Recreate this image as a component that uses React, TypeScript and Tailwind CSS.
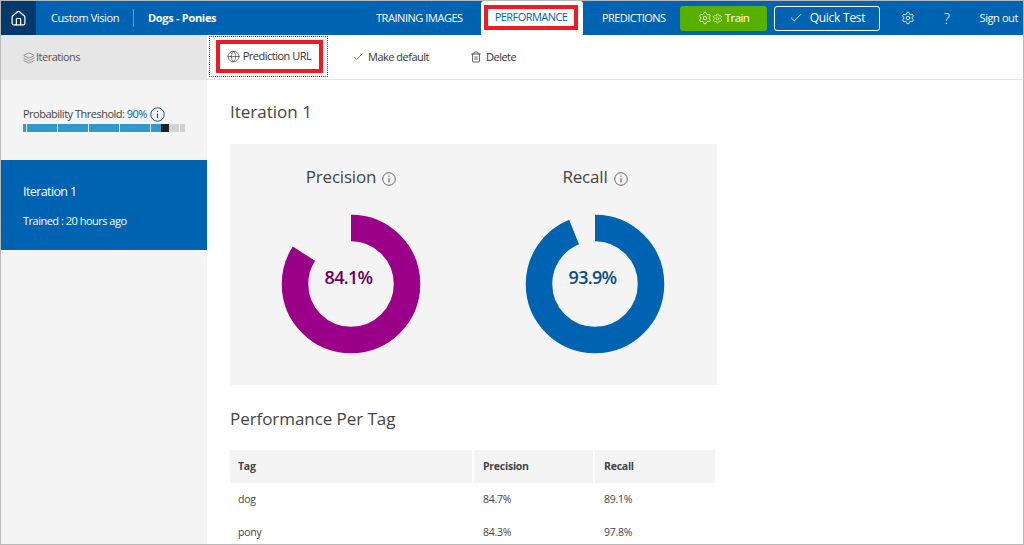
import { Check, Globe, House, Layers, Settings, Trash2 } from "lucide-react";

function InfoIcon({ size, color }: { size: number; color: string }) {
  return (
    <svg width={size} height={size} viewBox="0 0 16 16" fill="none" stroke={color} strokeWidth="1">
      <circle cx="8" cy="8" r="7.2" />
      <path d="M8 7v5" strokeWidth="1.2" />
      <path d="M8 4v1.3" strokeWidth="1.2" />
    </svg>
  );
}

function Donut({ value, color, textColor }: { value: number; color: string; textColor: string }) {
  return (
    <div className="relative w-[140px] h-[140px]">
      <svg width="140" height="140" viewBox="0 0 140 140">
        <circle
          cx="70"
          cy="70"
          r="56"
          fill="none"
          stroke={color}
          strokeWidth="26.5"
          pathLength={100}
          strokeDasharray={`${value} ${100 - value}`}
          transform="rotate(-90 70 70)"
        />
      </svg>
      <div
        className="absolute inset-0 flex items-center justify-center pb-[14px] pr-[5px] text-[18px] font-semibold tracking-[-0.7px]"
        style={{ color: textColor }}
      >
        {value}%
      </div>
    </div>
  );
}

function Metric({ title, value, color, textColor }: { title: string; value: number; color: string; textColor: string }) {
  return (
    <div className="flex flex-col items-center">
      <div className="flex items-center gap-[6px] h-[24px] mt-[21px] text-[17px] tracking-[-0.2px] text-[#444444]">
        {title}
        <span className="mt-[3px]">
          <InfoIcon size={14} color="#555555" />
        </span>
      </div>
      <div className="mt-[25px]">
        <Donut value={value} color={color} textColor={textColor} />
      </div>
    </div>
  );
}

export default function App() {
  return (
    <div
      className="w-[1024px] h-[545px] border border-[#b9b9b9] overflow-hidden flex flex-col bg-white text-[#333333]"
      style={{ fontFamily: '"Open Sans", "Noto Sans", sans-serif' }}
    >
      <header className="h-[34px] shrink-0 flex items-center bg-[#0063b1] text-white text-[11px] tracking-[-0.4px]">
        <div className="w-[35px] h-full bg-[#003a6c] flex items-center justify-center">
          <House size={17} strokeWidth={1.7} />
        </div>
        <span className="ml-[15px] w-[67px] whitespace-nowrap">Custom Vision</span>
        <div className="ml-[15px] w-px h-[18px] bg-[#5b9bd0]" />
        <span className="ml-[14px] w-[69px] font-bold whitespace-nowrap tracking-[-0.3px]">Dogs - Ponies</span>
        <span className="ml-[159px] w-[88px] whitespace-nowrap tracking-[-0.45px]">TRAINING IMAGES</span>
        <div className="ml-[17px] w-[102px] h-[34px] bg-white rounded-t-[3px] pt-[4px] pl-[3px] pr-[5px]">
          <div className="h-[25px] border-[4px] border-[#ed1c24] flex items-center justify-center text-[#0063b1] whitespace-nowrap tracking-[-0.55px]">
            PERFORMANCE
          </div>
        </div>
        <span className="ml-[19px] w-[64px] whitespace-nowrap tracking-[-0.55px]">PREDICTIONS</span>
        <button className="ml-[14px] w-[87px] h-[25px] rounded-[3px] bg-[#57b000] flex items-center justify-center gap-[2px] text-[11.5px] tracking-[-0.6px]">
          <span className="flex items-center">
            <Settings size={14} strokeWidth={1.3} />
            <Settings size={11} strokeWidth={1.3} />
          </span>
          Train
        </button>
        <button className="ml-[7px] w-[106px] h-[25px] rounded-[3px] border border-white flex items-center justify-center gap-[7px] text-[12px] tracking-[-0.25px]">
          <Check size={14} strokeWidth={1.4} />
          Quick Test
        </button>
        <span className="ml-[21px]">
          <Settings size={14} strokeWidth={1.5} />
        </span>
        <span className="ml-[29px] text-[14px] font-light">?</span>
        <span className="ml-[30px] whitespace-nowrap">Sign out</span>
      </header>

      <div className="flex-1 flex min-h-0">
        <aside className="w-[206px] shrink-0 bg-[#f4f4f4] flex flex-col text-[11px] tracking-[-0.5px]">
          <div className="h-[45px] bg-[#e6e6e6] flex items-center pl-[22px] gap-[1px] text-[#555555]">
            <Layers size={12} strokeWidth={1.2} />
            Iterations
          </div>
          <div className="pl-[22px] pt-[26px] h-[80px]">
            <div className="flex items-center h-[16px] text-[#444444] whitespace-nowrap">
              Probability Threshold:&nbsp;<span className="text-[#0063b1]">90%</span>
              <span className="ml-[3px]">
                <InfoIcon size={15} color="#0f4c81" />
              </span>
            </div>
            <div className="mt-[2px] w-[162px] h-[8px] flex">
              <div className="w-[138px] flex gap-px">
                <div className="w-[3px] bg-[#3399cc]" />
                <div className="w-[30px] bg-[#3399cc]" />
                <div className="w-[30px] bg-[#3399cc]" />
                <div className="w-[30px] bg-[#3399cc]" />
                <div className="w-[30px] bg-[#3399cc]" />
                <div className="flex-1 bg-[#3399cc]" />
              </div>
              <div className="w-[8px] bg-[#1f1f1f]" />
              <div className="w-[10px] bg-[#d2d2d2]" />
              <div className="w-px bg-[#f4f4f4]" />
              <div className="flex-1 bg-[#d2d2d2]" />
            </div>
          </div>
          <div className="h-[90px] bg-[#0063b1] text-white pl-[22px] pt-[22px]">
            <div className="text-[12.5px] leading-[20px] tracking-[-0.6px]">Iteration 1</div>
            <div className="mt-[11px] leading-[16px]">Trained : 20 hours ago</div>
          </div>
        </aside>

        <main className="flex-1 min-w-0 flex flex-col">
          <div className="h-[45px] shrink-0 border-b border-[#e6e6e6] flex items-center text-[11px] tracking-[-0.5px] text-[#333333]">
            <div className="ml-[2px] w-[119px] h-[41px] mt-[-1px] pl-[1px] border border-dotted border-[#444444] flex items-center justify-center">
              <div className="w-[107px] h-[33px] border-[4px] border-[#ed1c24] flex items-center justify-center gap-[3px]">
                <Globe size={13} strokeWidth={1.2} />
                Prediction URL
              </div>
            </div>
            <span className="ml-[24px] flex items-center gap-[4px]">
              <Check size={12} strokeWidth={1.5} color="#6b4a1f" />
              Make default
            </span>
            <span className="ml-[41px] flex items-center gap-[4px]">
              <Trash2 size={12} strokeWidth={1.5} />
              Delete
            </span>
          </div>

          <div className="pl-[23px] flex-1 overflow-hidden">
            <h1 className="mt-[19px] h-[26px] leading-[26px] text-[17px] text-[#444444]">Iteration 1</h1>
            <section className="mt-[19px] w-[487px] h-[241px] bg-[#f4f4f4] grid grid-cols-[242px_246px]">
              <Metric title="Precision" value={84.1} color="#9b0088" textColor="#6b0060" />
              <Metric title="Recall" value={93.9} color="#0063b1" textColor="#0f4c81" />
            </section>
            <h2 className="mt-[21px] h-[26px] leading-[26px] text-[17px] tracking-[-0.06px] text-[#444444]">Performance Per Tag</h2>
            <div className="mt-[18px] w-[486px] text-[10.5px] tracking-[-0.25px] text-[#444444]">
              <div className="grid grid-cols-[242px_119px_120px] gap-x-[2px] font-bold">
                <div className="h-[33px] bg-[#f4f4f4] flex items-center pl-[8px]">Tag</div>
                <div className="h-[33px] bg-[#f4f4f4] flex items-center pl-[9px]">Precision</div>
                <div className="h-[33px] bg-[#f4f4f4] flex items-center pl-[9px]">Recall</div>
              </div>
              <div className="grid grid-cols-[242px_119px_120px] gap-x-[2px]">
                <div className="h-[33px] flex items-center pl-[8px]">dog</div>
                <div className="h-[33px] flex items-center pl-[9px]">84.7%</div>
                <div className="h-[33px] flex items-center pl-[9px]">89.1%</div>
              </div>
              <div className="grid grid-cols-[242px_119px_120px] gap-x-[2px]">
                <div className="h-[33px] flex items-center pl-[8px]">pony</div>
                <div className="h-[33px] flex items-center pl-[9px]">84.3%</div>
                <div className="h-[33px] flex items-center pl-[9px]">97.8%</div>
              </div>
            </div>
          </div>
        </main>
      </div>
    </div>
  );
}
